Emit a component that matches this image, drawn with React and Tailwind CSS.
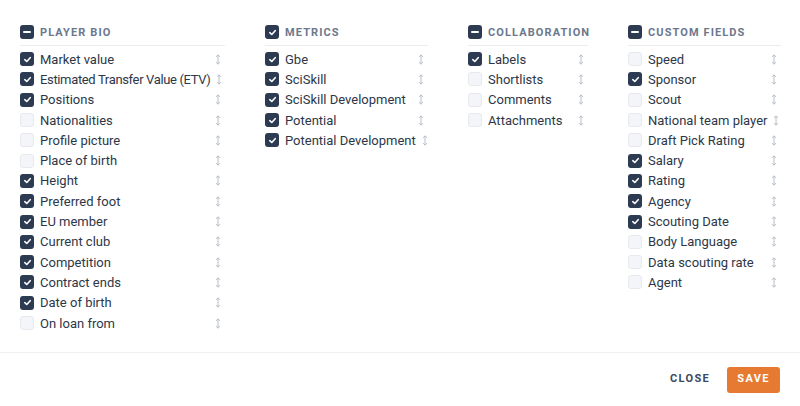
import React from "react";

const groups = [
  {
    title: "Player bio",
    w: "w-[205px]",
    items: [
      ["Market value", 1],
      ["Estimated Transfer Value (ETV)", 1, true],
      ["Positions", 1],
      ["Nationalities", 0],
      ["Profile picture", 0],
      ["Place of birth", 0],
      ["Height", 1],
      ["Preferred foot", 1],
      ["EU member", 1],
      ["Current club", 1],
      ["Competition", 1],
      ["Contract ends", 1],
      ["Date of birth", 1],
      ["On loan from", 0],
    ],
    header: "minus",
  },
  {
    title: "Metrics",
    w: "w-[163px]",
    items: [
      ["Gbe", 1],
      ["SciSkill", 1],
      ["SciSkill Development", 1],
      ["Potential", 1],
      ["Potential Development", 1],
    ],
    header: "check",
  },
  {
    title: "Collaboration",
    w: "w-[120px]",
    items: [
      ["Labels", 1],
      ["Shortlists", 0],
      ["Comments", 0],
      ["Attachments", 0],
    ],
    header: "minus",
  },
  {
    title: "Custom fields",
    w: "w-[153px]",
    items: [
      ["Speed", 0],
      ["Sponsor", 1],
      ["Scout", 0],
      ["National team player", 0],
      ["Draft Pick Rating", 0],
      ["Salary", 1],
      ["Rating", 1],
      ["Agency", 1],
      ["Scouting Date", 1],
      ["Body Language", 0],
      ["Data scouting rate", 0],
      ["Agent", 0],
    ],
    header: "minus",
  },
];

function Box({ state }) {
  if (state === "check" || state === 1) {
    return (
      <span className="flex h-[14px] w-[14px] shrink-0 items-center justify-center rounded-[3px] bg-[#2c3a52]">
        <svg width="9" height="9" viewBox="0 0 10 10" fill="none">
          <path d="M2 5.2 L4.2 7.2 L8 3" stroke="white" strokeWidth="1.8" strokeLinecap="round" strokeLinejoin="round" />
        </svg>
      </span>
    );
  }
  if (state === "minus") {
    return (
      <span className="flex h-[14px] w-[14px] shrink-0 items-center justify-center rounded-[3px] bg-[#2c3a52]">
        <span className="h-[2px] w-[8px] rounded-full bg-white" />
      </span>
    );
  }
  return <span className="h-[14px] w-[14px] shrink-0 rounded-[3px] border border-[#e6e9ee] bg-[#f3f5f8]" />;
}

function Sort() {
  return (
    <svg width="6" height="11" viewBox="0 0 6 11" fill="none" className="shrink-0">
      <path d="M3 1 V10 M1.2 2.6 L3 1 L4.8 2.6 M1.2 8.4 L3 10 L4.8 8.4" stroke="#b8bfca" strokeWidth="1" strokeLinecap="round" strokeLinejoin="round" />
    </svg>
  );
}

export default function App() {
  return (
    <div className="flex h-[406px] w-[800px] flex-col bg-white font-['Roboto',sans-serif] text-[#2d3748]">
      <div className="flex h-[353px] gap-[40px] border-b border-[#eef0f3] px-[20px] pt-[25px]">
        {groups.map((g) => (
          <div key={g.title} className={`${g.w} flex flex-col`}>
            <div className="flex h-[14px] items-center gap-[6px]">
              <Box state={g.header} />
              <span className="text-[11px] font-bold uppercase leading-none tracking-[0.1em] text-[#6b788d]">{g.title}</span>
            </div>
            <div className="mt-[6px] h-px bg-[#e9ecf1]" />
            <div className="mt-[3px] flex flex-col">
              {g.items.map(([label, on, tight]) => (
                <div key={label} className="flex h-[20.3px] items-center gap-[6px] pr-[4px]">
                  <Box state={on} />
                  <span className={tight ? "flex-1 whitespace-nowrap text-[13px] leading-none tracking-[-0.35px]" : "flex-1 whitespace-nowrap text-[13px] leading-none"}>{label}</span>
                  <Sort />
                </div>
              ))}
            </div>
          </div>
        ))}
      </div>
      <div className="flex flex-1 items-center justify-end gap-[17px] pr-[20px]">
        <button className="text-[11px] font-bold uppercase tracking-[0.12em] text-[#3b4860]">Close</button>
        <button className="h-[26px] w-[53px] rounded-[3px] bg-[#e67a30] text-[11px] font-bold uppercase tracking-[0.12em] text-white">Save</button>
      </div>
    </div>
  );
}
